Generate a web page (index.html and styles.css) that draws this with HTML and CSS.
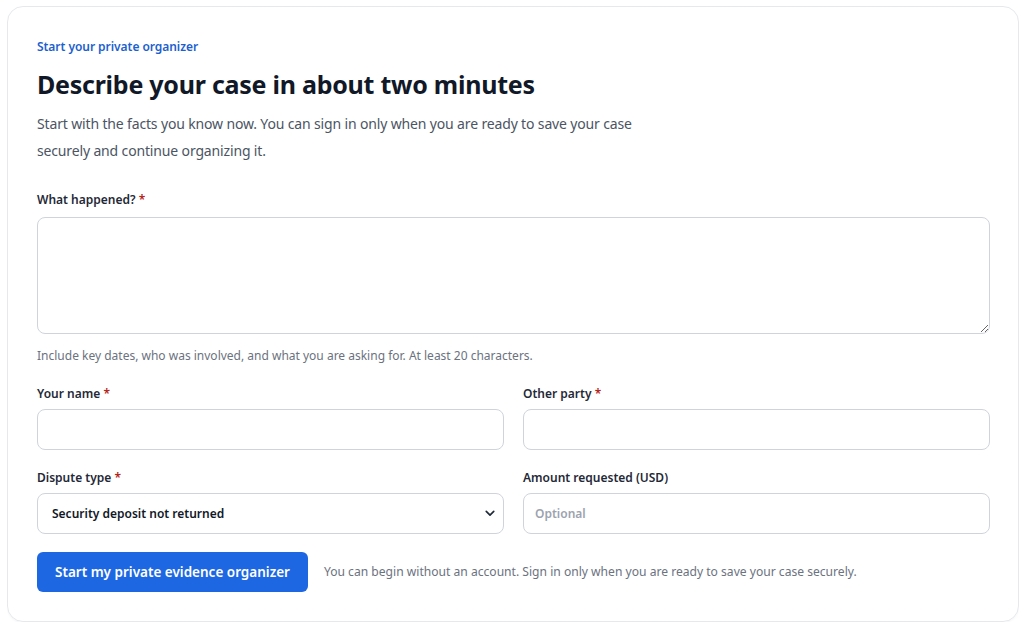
FILE: index.html
```html
<!DOCTYPE html>
<html lang="en">
<head>
<meta charset="utf-8">
<title>Start your private organizer</title>
<link rel="stylesheet" href="styles.css">
</head>
<body>
<main class="card">
  <p class="eyebrow">Start your private organizer</p>
  <h1 class="title">Describe your case in about two minutes</h1>
  <p class="lead">Start with the facts you know now. You can sign in only when you are ready to save your case securely and continue organizing it.</p>

  <form class="intake">
    <div class="field">
      <label class="label label-wide" for="story">What happened? <span class="req">*</span></label>
      <textarea id="story" class="control textarea"></textarea>
      <p class="hint">Include key dates, who was involved, and what you are asking for. At least 20 characters.</p>
    </div>

    <div class="grid">
      <div class="field">
        <label class="label" for="name">Your name <span class="req">*</span></label>
        <input id="name" class="control" type="text">
      </div>
      <div class="field">
        <label class="label" for="party">Other party <span class="req">*</span></label>
        <input id="party" class="control" type="text">
      </div>
      <div class="field">
        <label class="label" for="type">Dispute type <span class="req">*</span></label>
        <div class="select-wrap">
          <select id="type" class="control select">
            <option>Security deposit not returned</option>
            <option>Unpaid invoice</option>
            <option>Property damage</option>
          </select>
          <svg class="chevron" viewBox="0 0 12 8" width="10" height="7" aria-hidden="true"><path d="M1.5 1.5 6 6l4.5-4.5" fill="none" stroke="#1f2937" stroke-width="2" stroke-linecap="round" stroke-linejoin="round"/></svg>
        </div>
      </div>
      <div class="field">
        <label class="label" for="amount">Amount requested (USD)</label>
        <input id="amount" class="control" type="text" placeholder="Optional">
      </div>
    </div>

    <div class="actions">
      <button class="btn" type="button">Start my private evidence organizer</button>
      <p class="note">You can begin without an account. Sign in only when you are ready to save your case securely.</p>
    </div>
  </form>
</main>
</body>
</html>
```

FILE: styles.css
```css
* {
  box-sizing: border-box;
}

html, body {
  background: #ffffff;
}

body {
  margin: 6px 5px 6px 7px;
  font-family: "Noto Sans", "Open Sans", Arial, sans-serif;
  color: #1f2937;
}

.card {
  border: 1px solid #e6e8ec;
  border-radius: 16px;
  padding: 31px 28px 29px 29px;
  box-shadow: 0 1px 2px rgba(17, 24, 39, 0.04);
}

.eyebrow {
  margin: 0;
  font-size: 12px;
  line-height: 18px;
  font-weight: 600;
  color: #1d5fce;
  letter-spacing: -0.05px;
}

.title {
  margin: 11px 0 0;
  font-size: 25px;
  line-height: 34px;
  font-weight: 700;
  color: #111827;
  letter-spacing: -0.25px;
}

.lead {
  margin: 9px 0 0;
  max-width: 625px;
  font-size: 14px;
  line-height: 27px;
  color: #4b5563;
  letter-spacing: -0.15px;
}

.intake {
  margin-top: 27px;
}

.field {
  display: flex;
  flex-direction: column;
}

.label {
  font-size: 12px;
  line-height: 18px;
  font-weight: 600;
  color: #1f2937;
  margin-bottom: 6px;
}

.label-wide {
  margin-bottom: 8px;
}

.req {
  color: #b42318;
}

.control {
  width: 100%;
  height: 41px;
  border: 1px solid #cfd4db;
  border-radius: 8px;
  background: #ffffff;
  font-family: inherit;
  font-size: 12px;
  color: #1f2937;
  padding: 0 11px;
  outline: none;
}

.control::placeholder {
  color: #9ca3af;
  font-weight: 600;
}

.textarea {
  height: 117px;
  padding: 10px 14px;
  resize: vertical;
}

.hint {
  margin: 13px 0 0;
  font-size: 12px;
  line-height: 18px;
  color: #6b7280;
}

.grid {
  margin-top: 20px;
  display: grid;
  grid-template-columns: 1fr 1fr;
  column-gap: 19px;
  row-gap: 19px;
}

.select-wrap {
  position: relative;
}

.select {
  appearance: none;
  -webkit-appearance: none;
  padding-left: 14px;
  font-weight: 600;
  color: #111827;
}

.chevron {
  position: absolute;
  right: 9px;
  top: 17px;
  pointer-events: none;
}

.actions {
  margin-top: 18px;
  display: flex;
  align-items: center;
  gap: 16px;
}

.btn {
  height: 40px;
  padding: 0 18px;
  border: none;
  border-radius: 6px;
  background: #1d67e3;
  color: #ffffff;
  font-family: inherit;
  font-size: 13.5px;
  font-weight: 600;
  cursor: pointer;
}

.note {
  margin: 0;
  font-size: 12.1px;
  line-height: 18px;
  color: #6b7280;
}
```
